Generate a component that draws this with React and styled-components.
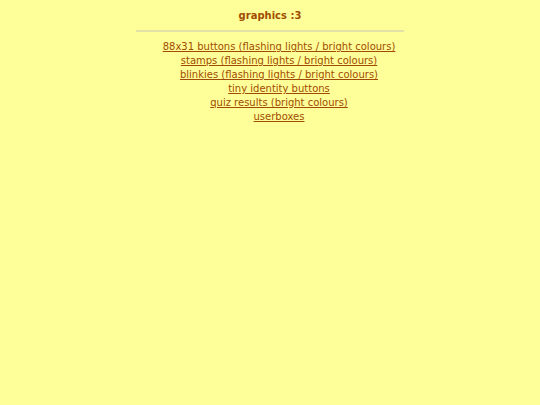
import React from 'react';
import styled, { createGlobalStyle } from 'styled-components';

const GlobalStyle = createGlobalStyle`
	body {
		margin: 0;
		background: #ffff99;
		color: #a04c00;
		font-family: "DejaVu Sans", sans-serif;
	}
`

const Page = styled.main`
	width: 50%;
	margin: 0 auto;
	padding-top: 8px;
	text-align: center;
`

const Title = styled.h1`
	margin: 0;
	font-size: 10px;
	font-weight: bold;
	line-height: 16px;
`

const Divider = styled.hr`
	margin: 6px 1px 8px;
	border: 0;
	border-top: 2px solid #e2e2a8;
`

const LinkList = styled.ul`
	display: flex;
	flex-direction: column;
	align-items: center;
	margin: 0;
	padding: 0 0 0 18px;
	list-style: none;
`

const LinkItem = styled.li`
	font-size: 10px;
	line-height: 14px;
	white-space: nowrap;
`

const GraphicsLink = styled.a`
	color: #a04c00;
	text-decoration: underline;
`

const links = [
	{ href: '#buttons', label: '88x31 buttons (flashing lights / bright colours)' },
	{ href: '#stamps', label: 'stamps (flashing lights / bright colours)' },
	{ href: '#blinkies', label: 'blinkies (flashing lights / bright colours)' },
	{ href: '#identity', label: 'tiny identity buttons' },
	{ href: '#quizzes', label: 'quiz results (bright colours)' },
	{ href: '#userboxes', label: 'userboxes' }
];

export default function App() {
	return (
		<>
			<GlobalStyle />
			<Page>
				<Title>graphics :3</Title>
				<Divider />
				<LinkList>
					{links.map(link => (
						<LinkItem key={link.href}>
							<GraphicsLink href={link.href}>{link.label}</GraphicsLink>
						</LinkItem>
					))}
				</LinkList>
			</Page>
		</>
	);
}
